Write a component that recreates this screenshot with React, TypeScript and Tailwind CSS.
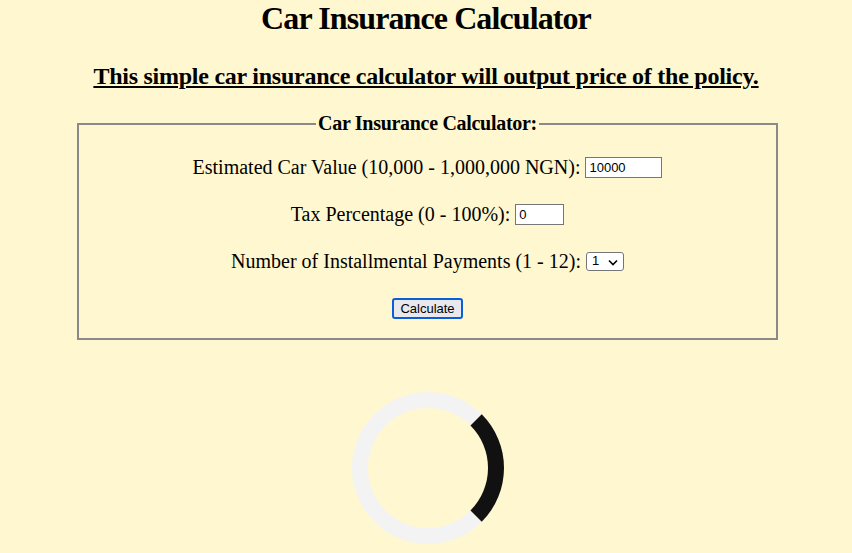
import React from 'react';

const App: React.FC = () => {
  return (
    <div className="min-h-[553px] w-full bg-[#fff7cf] font-['Liberation_Serif',serif] text-black">
      <h1 className="pt-0 text-center text-[32px] font-bold leading-[37px] tracking-[-0.9px]">Car Insurance Calculator</h1>

      <h2 className="mt-[25px] text-center text-[24px] font-bold leading-[28px] tracking-[-0.25px] underline">
        This simple car insurance calculator will output price of the policy.
      </h2>

      <form className="ml-[77px] mt-[23px] w-[701px]">
        <fieldset className="border-2 border-[#8a8a8a] px-4 pb-[19px]">
          <legend className="mx-auto px-[2px] text-[20px] font-bold leading-[21px] tracking-[-0.3px]">
            Car Insurance Calculator:
          </legend>

          <div className="mt-[21px] flex flex-col items-center gap-[23px] text-[20px]">
            <label className="flex h-[24px] items-center gap-[5px]">
              Estimated Car Value (10,000 - 1,000,000 NGN):
              <input
                type="text"
                defaultValue="10000"
                className="h-[21px] w-[77px] border border-[#767676] bg-white px-[3px] font-['Liberation_Sans',sans-serif] text-[13px]"
              />
            </label>

            <label className="flex h-[24px] items-center gap-[5px]">
              Tax Percentage (0 - 100%):
              <input
                type="text"
                defaultValue="0"
                className="h-[21px] w-[49px] border border-[#767676] bg-white px-[3px] font-['Liberation_Sans',sans-serif] text-[13px]"
              />
            </label>

            <label className="flex h-[24px] items-center gap-[5px]">
              Number of Installmental Payments (1 - 12):
              <span className="relative flex h-[19px] w-[38px] items-center rounded-[3px] border border-[#767676] bg-white pl-[5px] font-['Liberation_Sans',sans-serif] text-[13px]">
                1
                <svg className="absolute right-[5px] top-[6px]" width="10" height="7" viewBox="0 0 10 7">
                  <path d="M1 1.5 L5 5.5 L9 1.5" fill="none" stroke="#000" strokeWidth="1.6" />
                </svg>
              </span>
            </label>

            <button
              type="button"
              className="mt-[2px] h-[21px] w-[71px] rounded-[3px] border-2 border-[#0b5fd6] bg-[#e9e9ed] font-['Liberation_Sans',sans-serif] text-[13px] leading-none"
            >
              Calculate
            </button>
          </div>
        </fieldset>
      </form>

      <div className="mt-[52px] flex justify-center pl-[4px]">
        <div className="h-[152px] w-[152px] rounded-full border-[16px] border-[#f3f3f3] border-r-[#111111]" />
      </div>
    </div>
  );
};

export default App;
